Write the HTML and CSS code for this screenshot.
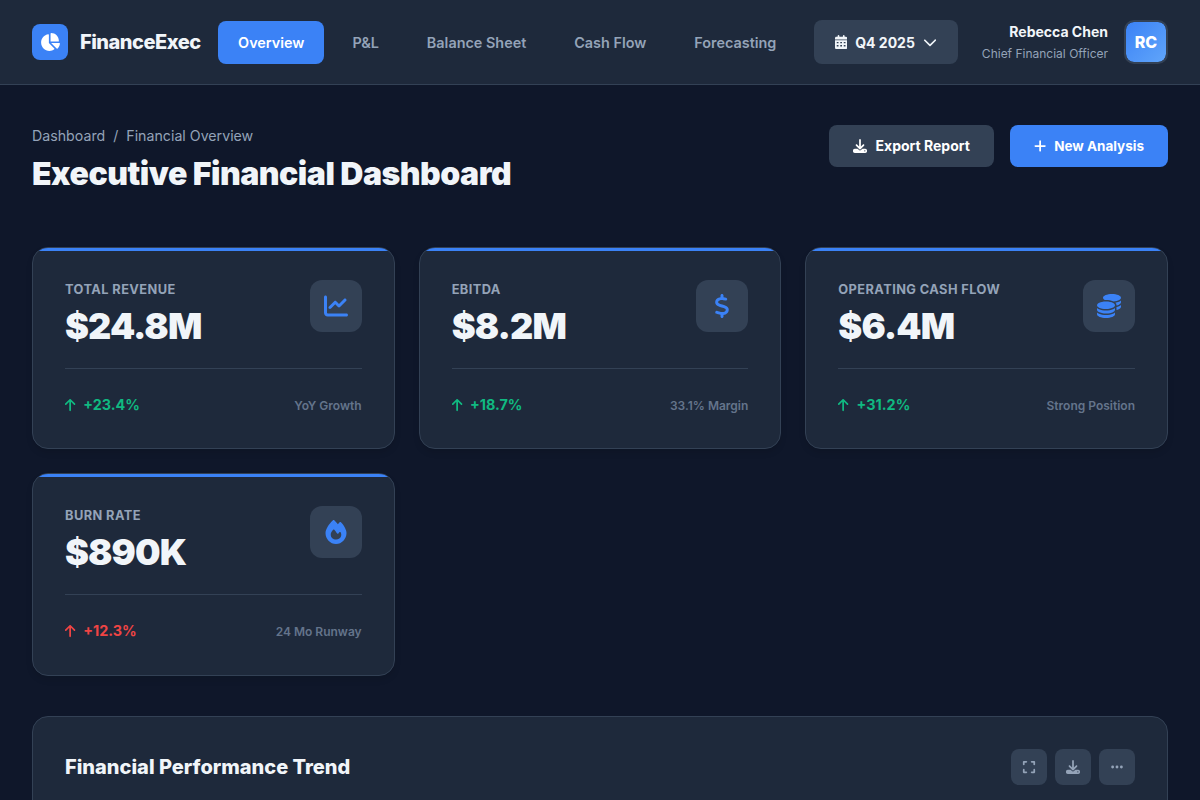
FILE: index.html
```html
<!DOCTYPE html>
<html lang="en">
<head>
<meta charset="utf-8">
<title>FinanceExec</title>
<link rel="stylesheet" href="styles.css">
</head>
<body>
<svg class="defs" aria-hidden="true">
  <symbol id="i-pie" viewBox="0 0 576 512"><path d="M304 240V16.6c0-9 7-16.6 16-16.6C443.7 0 544 100.3 544 224c0 9-7.6 16-16.6 16H304zM32 272C32 150.7 122.1 50.3 239 34.3c9.2-1.3 17 6.1 17 15.4V288L412.5 444.5c6.7 6.7 6.2 17.7-1.5 23.1C371.8 495.6 323.8 512 272 512C139.5 512 32 404.6 32 272zm526.4 16c9.3 0 16.6 7.8 15.4 17c-7.7 55.9-34.6 105.6-73.9 142.3c-6 5.6-15.4 5.2-21.2-.7L320 288H558.4z"/></symbol>
  <symbol id="i-cal" viewBox="0 0 448 512"><path fill-rule="evenodd" d="M128 0c17.7 0 32 14.3 32 32V64H288V32c0-17.7 14.3-32 32-32s32 14.3 32 32V64h48c26.5 0 48 21.5 48 48v48H0V112C0 85.5 21.5 64 48 64H96V32c0-17.7 14.3-32 32-32zM0 192H448V464c0 26.5-21.5 48-48 48H48c-26.5 0-48-21.5-48-48V192zM64 256v48h64V256H64zM192 256v48h64V256H192zM320 256v48h64V256H320zM64 368v48h64V368H64zM192 368v48h64V368H192zM320 368v48h64V368H320z"/></symbol>
  <symbol id="i-chev" viewBox="0 0 512 512"><path d="M233.4 406.6c12.5 12.5 32.8 12.5 45.3 0l192-192c12.5-12.5 12.5-32.8 0-45.3s-32.8-12.5-45.3 0L256 338.7 86.6 169.4c-12.5-12.5-32.8-12.5-45.3 0s-12.5 32.8 0 45.3l192 192z"/></symbol>
  <symbol id="i-down" viewBox="0 0 512 512"><path d="M288 32c0-17.7-14.3-32-32-32s-32 14.3-32 32V274.7l-73.4-73.4c-12.5-12.5-32.8-12.5-45.3 0s-12.5 32.8 0 45.3l128 128c12.5 12.5 32.8 12.5 45.3 0l128-128c12.5-12.5 12.5-32.8 0-45.3s-32.8-12.5-45.3 0L288 274.7V32zM64 352c-35.3 0-64 28.7-64 64v32c0 35.3 28.7 64 64 64H448c35.3 0 64-28.7 64-64V416c0-35.3-28.7-64-64-64H346.5l-45.3 45.3c-25 25-65.5 25-90.5 0L165.5 352H64zm368 56a24 24 0 1 1 0 48 24 24 0 1 1 0-48z"/></symbol>
  <symbol id="i-plus" viewBox="0 0 448 512"><path d="M256 80c0-17.7-14.3-32-32-32s-32 14.3-32 32V224H48c-17.7 0-32 14.3-32 32s14.3 32 32 32H192V432c0 17.7 14.3 32 32 32s32-14.3 32-32V288H400c17.7 0 32-14.3 32-32s-14.3-32-32-32H256V80z"/></symbol>
  <symbol id="i-line" viewBox="0 0 512 512"><path d="M64 64c0-17.7-14.3-32-32-32S0 46.3 0 64V400c0 44.2 35.8 80 80 80H480c17.7 0 32-14.3 32-32s-14.3-32-32-32H80c-8.8 0-16-7.2-16-16V64zm406.6 86.6c12.5-12.5 12.5-32.8 0-45.3s-32.8-12.5-45.3 0L320 210.7l-57.4-57.4c-12.5-12.5-32.8-12.5-45.3 0l-112 112c-12.5 12.5-12.5 32.8 0 45.3s32.8 12.5 45.3 0L240 221.3l57.4 57.4c12.5 12.5 32.8 12.5 45.3 0l128-128z"/></symbol>
  <symbol id="i-dollar" viewBox="0 0 320 512"><path d="M160 0c17.7 0 32 14.3 32 32V67.7c1.6 .2 3.1 .4 4.7 .7c.4 .1 .7 .1 1.1 .2l48 8.8c17.4 3.2 28.9 19.9 25.7 37.2s-19.9 28.9-37.2 25.7l-47.5-8.7c-31.3-4.6-58.9-1.5-78.3 6.2s-27.2 18.3-29 28.1c-2 10.7-.5 16.7 1.2 20.4c1.8 3.9 5.5 8.3 12.8 13.2c16.3 10.7 41.3 17.7 73.7 26.3l2.9 .8c28.6 7.6 63.6 16.8 89.6 33.8c14.2 9.3 27.6 21.9 35.9 39.5c8.5 17.9 10.3 37.9 6.4 59.2c-6.9 38-33.1 63.4-65.6 76.7c-13.7 5.6-28.6 9.2-44.4 11V480c0 17.7-14.3 32-32 32s-32-14.3-32-32V445.1c-.4-.1-.9-.1-1.3-.2l-.2 0 0 0c-24.4-3.8-64.5-14.3-91.5-26.3c-16.1-7.2-23.4-26.1-16.2-42.2s26.1-23.4 42.2-16.2c20.9 9.3 55.3 18.5 75.2 21.6c31.9 4.7 58.2 2 76-5.3c16.9-6.9 24.6-16.9 26.8-28.9c1.9-10.6 .4-16.7-1.3-20.4c-1.9-4-5.6-8.4-13-13.3c-16.4-10.7-41.5-17.7-74-26.3l-2.8-.7 0 0C119.4 279.3 84.4 270 58.4 253c-14.2-9.3-27.5-22-35.8-39.6c-8.4-17.9-10.1-37.9-6.1-59.2C23.7 116 52.3 91.2 84.8 78.3c13.3-5.3 27.9-8.9 43.2-11V32c0-17.7 14.3-32 32-32z"/></symbol>
  <symbol id="i-coins" viewBox="0 0 512 512"><path d="M512 80c0 18-14.3 34.6-38.4 48c-29.1 16.1-72.5 27.5-122.3 30.9c-3.7-1.8-7.4-3.5-11.3-5C300.6 137.4 248.2 128 192 128c-8.3 0-16.4 .2-24.5 .6l-1.1-.6C142.3 114.6 128 98 128 80c0-44.2 86-80 192-80S512 35.8 512 80zM160.7 161.1c10.2-.7 20.7-1.1 31.3-1.1c62.2 0 117.4 12.3 152.5 31.4C369.3 204.9 384 221.7 384 240c0 4-.7 7.9-2.1 11.7c-4.6 13.2-17 25.3-35 35.5c0 0 0 0 0 0c-.1 .1-.3 .1-.4 .2l0 0 0 0c-.3 .2-.6 .3-.9 .5c-35 19.4-90.8 32-153.6 32c-59.6 0-112.9-11.3-148.2-29.1c-1.9-.9-3.7-1.9-5.5-2.9C14.3 274.6 0 258 0 240c0-34.8 53.4-64.5 128-75.4c10.5-1.5 21.4-2.7 32.7-3.5zM416 240c0-21.9-10.6-39.9-24.1-53.4c28.3-4.4 54.2-11.4 76.2-20.5c16.3-6.8 31.5-15.2 43.9-25.5V176c0 19.3-16.5 37.1-43.8 50.9c-14.6 7.4-32.4 13.7-52.4 18.5c.1-1.8 .2-3.5 .2-5.3zm-32 96c0 18-14.3 34.6-38.4 48c-1.8 1-3.6 1.9-5.5 2.9C304.9 404.7 251.6 416 192 416c-62.8 0-118.6-12.6-153.6-32C14.3 370.6 0 354 0 336V300.6c12.5 10.3 27.6 18.7 43.9 25.5C83.4 342.6 135.8 352 192 352s108.6-9.4 148.1-25.9c7.8-3.2 15.3-6.9 22.4-10.9c6.1-3.4 11.8-7.2 17.2-11.2c1.5-1.1 2.9-2.3 4.3-3.4V304v5.7V336zm32 0V304 278.1c19-4.2 36.5-9.5 52.1-16c16.3-6.8 31.5-15.2 43.9-25.5V272c0 10.5-5 21-14.9 30.9c-16.3 16.3-45 29.7-81.3 38.4c.1-1.7 .2-3.5 .2-5.3zM192 448c56.2 0 108.6-9.4 148.1-25.9c16.3-6.8 31.5-15.2 43.9-25.5V432c0 44.2-86 80-192 80S0 476.2 0 432V396.6c12.5 10.3 27.6 18.7 43.9 25.5C83.4 438.6 135.8 448 192 448z"/></symbol>
  <symbol id="i-fire" viewBox="0 0 448 512"><path d="M159.3 5.4c7.8-7.3 19.9-7.2 27.7 .1c27.6 25.9 53.5 53.8 77.7 84c11-14.4 23.5-30.1 37-42.9c7.9-7.4 20.1-7.4 28 .1c34.6 33 63.9 76.6 84.5 118c20.3 40.8 33.8 82.5 33.8 111.9C448 404.2 348.2 512 224 512C98.4 512 0 404.1 0 276.5c0-38.4 17.8-85.3 45.4-131.7C73.3 97.7 112.7 48.6 159.3 5.4zM225.7 416c25.3 0 47.7-7 68.8-21c42.1-29.4 53.4-88.2 28.1-134.4c-4.5-9-16-9.6-22.5-2l-25.2 29.3c-6.6 7.6-18.5 7.4-24.7-.5c-16.5-21-46-58.5-62.8-79.8c-6.3-8-18.3-8.1-24.7-.1c-33.8 42.5-50.8 69.3-50.8 99.4C112 375.4 162.6 416 225.7 416z"/></symbol>
  <symbol id="i-up" viewBox="0 0 384 512"><path d="M214.6 41.4c-12.5-12.5-32.8-12.5-45.3 0l-160 160c-12.5 12.5-12.5 32.8 0 45.3s32.8 12.5 45.3 0L160 141.2V448c0 17.7 14.3 32 32 32s32-14.3 32-32V141.2L329.4 246.6c12.5 12.5 32.8 12.5 45.3 0s12.5-32.8 0-45.3l-160-160z"/></symbol>
  <symbol id="i-expand" viewBox="0 0 448 512"><path d="M32 32C14.3 32 0 46.3 0 64v96c0 17.7 14.3 32 32 32s32-14.3 32-32V96h64c17.7 0 32-14.3 32-32s-14.3-32-32-32H32zM64 352c0-17.7-14.3-32-32-32s-32 14.3-32 32v96c0 17.7 14.3 32 32 32h96c17.7 0 32-14.3 32-32s-14.3-32-32-32H64V352zM320 32c-17.7 0-32 14.3-32 32s14.3 32 32 32h64v64c0 17.7 14.3 32 32 32s32-14.3 32-32V64c0-17.7-14.3-32-32-32H320zM448 352c0-17.7-14.3-32-32-32s-32 14.3-32 32v64H320c-17.7 0-32 14.3-32 32s14.3 32 32 32h96c17.7 0 32-14.3 32-32V352z"/></symbol>
  <symbol id="i-dots" viewBox="0 0 448 512"><circle cx="64" cy="256" r="52"/><circle cx="224" cy="256" r="52"/><circle cx="384" cy="256" r="52"/></symbol>
</svg>

<header class="topbar">
  <div class="brand">
    <span class="brand-mark"><svg class="ico-pie"><use href="#i-pie"/></svg></span>
    <span class="brand-name">FinanceExec</span>
  </div>
  <nav class="nav">
    <a class="nav-link is-active">Overview</a>
    <a class="nav-link">P&amp;L</a>
    <a class="nav-link">Balance Sheet</a>
    <a class="nav-link">Cash Flow</a>
    <a class="nav-link">Forecasting</a>
  </nav>
  <div class="topbar-right">
    <button class="period">
      <svg class="ico-cal"><use href="#i-cal"/></svg>
      <span>Q4 2025</span>
      <svg class="ico-chev"><use href="#i-chev"/></svg>
    </button>
    <div class="user">
      <div class="user-text">
        <div class="user-name">Rebecca Chen</div>
        <div class="user-role">Chief Financial Officer</div>
      </div>
      <div class="avatar">RC</div>
    </div>
  </div>
</header>

<main class="main">
  <section class="page-head">
    <div>
      <div class="crumbs"><span>Dashboard</span><span>/</span><span>Financial Overview</span></div>
      <h1 class="page-title">Executive Financial Dashboard</h1>
    </div>
    <div class="actions">
      <button class="btn btn-muted"><svg class="ico-down"><use href="#i-down"/></svg>Export Report</button>
      <button class="btn btn-primary"><svg class="ico-plus"><use href="#i-plus"/></svg>New Analysis</button>
    </div>
  </section>

  <section class="metrics">
    <article class="card">
      <div class="card-top">
        <div>
          <div class="card-label">Total Revenue</div>
          <div class="card-value">$24.8M</div>
        </div>
        <div class="card-icon"><svg class="ico-card"><use href="#i-line"/></svg></div>
      </div>
      <div class="card-foot">
        <div class="delta up"><svg class="ico-arrow"><use href="#i-up"/></svg>+23.4%</div>
        <div class="card-note">YoY Growth</div>
      </div>
    </article>
    <article class="card">
      <div class="card-top">
        <div>
          <div class="card-label">EBITDA</div>
          <div class="card-value">$8.2M</div>
        </div>
        <div class="card-icon"><svg class="ico-card"><use href="#i-dollar"/></svg></div>
      </div>
      <div class="card-foot">
        <div class="delta up"><svg class="ico-arrow"><use href="#i-up"/></svg>+18.7%</div>
        <div class="card-note">33.1% Margin</div>
      </div>
    </article>
    <article class="card">
      <div class="card-top">
        <div>
          <div class="card-label">Operating Cash Flow</div>
          <div class="card-value">$6.4M</div>
        </div>
        <div class="card-icon"><svg class="ico-card"><use href="#i-coins"/></svg></div>
      </div>
      <div class="card-foot">
        <div class="delta up"><svg class="ico-arrow"><use href="#i-up"/></svg>+31.2%</div>
        <div class="card-note">Strong Position</div>
      </div>
    </article>
    <article class="card">
      <div class="card-top">
        <div>
          <div class="card-label">Burn Rate</div>
          <div class="card-value">$890K</div>
        </div>
        <div class="card-icon"><svg class="ico-card"><use href="#i-fire"/></svg></div>
      </div>
      <div class="card-foot">
        <div class="delta down"><svg class="ico-arrow"><use href="#i-up"/></svg>+12.3%</div>
        <div class="card-note">24 Mo Runway</div>
      </div>
    </article>
  </section>

  <section class="panel">
    <div class="panel-head">
      <h2 class="panel-title">Financial Performance Trend</h2>
      <div class="panel-tools">
        <button class="tool"><svg class="ico-tool"><use href="#i-expand"/></svg></button>
        <button class="tool"><svg class="ico-tool"><use href="#i-down"/></svg></button>
        <button class="tool"><svg class="ico-tool"><use href="#i-dots"/></svg></button>
      </div>
    </div>
  </section>
</main>
</body>
</html>
```

FILE: styles.css
```css
* { box-sizing: border-box; }
html, body { margin: 0; padding: 0; }
body {
  background: #0f172a;
  color: #f1f5f9;
  font-family: Inter, "Liberation Sans", sans-serif;
  height: 800px;
  overflow: hidden;
}
svg { fill: currentColor; display: block; flex: none; }
.defs { width: 0; height: 0; position: absolute; }
button { font-family: inherit; border: 0; cursor: pointer; }

.topbar {
  height: 85px;
  display: flex;
  align-items: center;
  padding: 0 32px;
  background: #1e293b;
  border-bottom: 1px solid #334155;
}
.brand { display: flex; align-items: center; gap: 12px; }
.brand-mark {
  width: 36px; height: 36px;
  border-radius: 8px;
  background: #3b82f6;
  color: #fff;
  display: flex; align-items: center; justify-content: center;
}
.ico-pie { width: 20px; height: 18px; }
.brand-name { font-size: 20px; font-weight: 800; letter-spacing: -0.5px; color: #f1f5f9; }

.nav { display: flex; gap: 8px; margin-left: 17.5px; }
.nav-link {
  padding: 12px 20px;
  border-radius: 8px;
  font-size: 14.4px;
  font-weight: 600;
  line-height: 19px;
  color: #94a3b8;
}
.nav-link.is-active { background: #3b82f6; color: #fff; }

.topbar-right { margin-left: auto; display: flex; align-items: center; gap: 24px; }
.period {
  height: 44px;
  padding: 0 21px;
  display: flex; align-items: center; gap: 8px;
  background: #334155;
  border-radius: 8px;
  color: #f1f5f9;
  font-size: 14px;
  font-weight: 700;
}
.ico-cal { width: 12.25px; height: 14px; }
.ico-chev { width: 14px; height: 14px; }
.user { display: flex; align-items: center; gap: 16px; }
.user-text { text-align: right; }
.user-name { font-size: 14px; font-weight: 700; line-height: 18px; color: #f1f5f9; }
.user-role { font-size: 12px; line-height: 16px; margin-top: 5px; color: #94a3b8; }
.avatar {
  width: 44px; height: 44px;
  border: 2px solid #334155;
  border-radius: 10px;
  background: linear-gradient(135deg, #3b82f6, #60a5fa);
  background-clip: padding-box;
  color: #fff;
  font-size: 16px; font-weight: 800;
  display: flex; align-items: center; justify-content: center;
  padding-bottom: 1px;
}

.main { padding: 40px 32px; }
.page-head { display: flex; justify-content: space-between; align-items: flex-start; margin-bottom: 54px; }
.crumbs { display: flex; gap: 8px; font-size: 14.2px; line-height: 20px; color: #94a3b8; margin-top: 1px; }
.page-title { margin: 8px 0 0; font-size: 32px; line-height: 39px; font-weight: 900; letter-spacing: -0.5px; color: #f1f5f9; }
.actions { display: flex; gap: 16px; }
.btn {
  height: 42px;
  padding: 0 24px 1px;
  display: flex; align-items: center;
  border-radius: 8px;
  font-weight: 700;
  color: #fff;
}
.btn-muted { background: #334155; font-size: 14px; gap: 9px; }
.btn-primary { background: #3b82f6; font-size: 13.5px; gap: 8px; }
.ico-down { width: 14px; height: 14px; }
.ico-plus { width: 12.25px; height: 14px; }

.metrics { display: grid; grid-template-columns: repeat(3, 1fr); gap: 24px; margin-bottom: 40px; }
.card {
  height: 202.4px;
  padding: 32px;
  background: #1e293b;
  border: 1px solid #334155;
  border-radius: 16px;
  position: relative;
  overflow: hidden;
  box-shadow: 0 4px 6px rgba(0, 0, 0, 0.1);
}
.card::before {
  content: "";
  position: absolute; top: 0; left: 0; right: 0;
  height: 3px;
  background: #3b82f6;
}
.card-top { display: flex; justify-content: space-between; align-items: flex-start; height: 89.1px; border-bottom: 1px solid #334155; }
.card-label {
  font-size: 12.8px; font-weight: 700; line-height: 20px;
  letter-spacing: 0.42px; text-transform: uppercase;
  color: #94a3b8;
  margin-bottom: 4px;
}
.card-value { font-size: 36px; font-weight: 900; line-height: 44px; letter-spacing: -0.9px; color: #f1f5f9; }
.card-icon {
  width: 52px; height: 52px;
  border-radius: 12px;
  background: #334155;
  color: #3b82f6;
  display: flex; align-items: center; justify-content: center;
}
.ico-card { width: 24px; height: 24px; }
.card-foot { display: flex; justify-content: space-between; align-items: center; padding-top: 26px; }
.delta { display: flex; align-items: center; gap: 8px; font-size: 14.4px; font-weight: 700; line-height: 20px; }
.delta.up { color: #10b981; }
.delta.down { color: #ef4444; }
.ico-arrow { width: 12.25px; height: 14px; margin-right: -1px; margin-left: -1px; }
.card-note { font-size: 12px; font-weight: 600; color: #64748b; }

.panel {
  height: 400px;
  padding: 32px;
  background: #1e293b;
  border: 1px solid #334155;
  border-radius: 16px;
}
.panel-head { display: flex; justify-content: space-between; align-items: center; }
.panel-title { margin: 0; font-size: 20px; font-weight: 800; color: #f1f5f9; }
.panel-tools { display: flex; gap: 8px; }
.tool {
  width: 36px; height: 36px;
  border-radius: 8px;
  background: #334155;
  color: #94a3b8;
  display: flex; align-items: center; justify-content: center;
  padding: 0;
}
.ico-tool { width: 14px; height: 14px; }
```
